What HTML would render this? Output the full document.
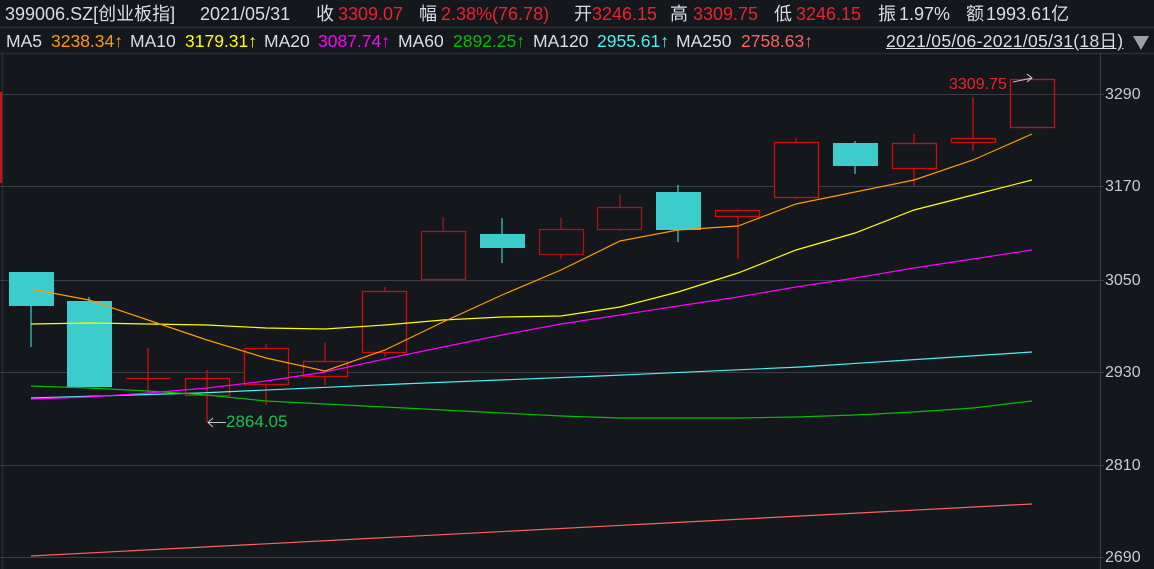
<!DOCTYPE html>
<html><head><meta charset="utf-8"><style>
html,body{margin:0;padding:0;background:#14171c;width:1154px;height:569px;overflow:hidden}
body{font-family:"Liberation Sans","Noto Sans CJK SC",sans-serif;color:#d8dde6;position:relative}
.a{position:absolute;white-space:nowrap;font-size:18px;line-height:20px;top:4px}
.b{position:absolute;white-space:nowrap;font-size:17.5px;line-height:20px;top:31px}
.r{color:#e8242c}
.lab{position:absolute;left:1105px;font-size:16px;color:#c4ccd6}
</style></head><body>
<div class="a" style="left:5px">399006.SZ[创业板指]</div>
<div class="a" style="left:200px">2021/05/31</div>
<div class="a" style="left:316px">收</div><div class="a r" style="left:338px">3309.07</div>
<div class="a" style="left:419px">幅</div><div class="a r" style="left:441px">2.38%(76.78)</div>
<div class="a" style="left:574px">开</div><div class="a r" style="left:592px">3246.15</div>
<div class="a" style="left:670px">高</div><div class="a r" style="left:693px">3309.75</div>
<div class="a" style="left:774px">低</div><div class="a r" style="left:796px">3246.15</div>
<div class="a" style="left:878px">振</div><div class="a" style="left:899px">1.97%</div>
<div class="a" style="left:966px">额</div><div class="a" style="left:986px">1993.61亿</div>

<div class="b" style="left:6px">MA5</div><div class="b" style="left:51px;color:#ff9a00">3238.34↑</div>
<div class="b" style="left:130px">MA10</div><div class="b" style="left:185px;color:#ffff00">3179.31↑</div>
<div class="b" style="left:264px">MA20</div><div class="b" style="left:318px;color:#ff00ff">3087.74↑</div>
<div class="b" style="left:398px">MA60</div><div class="b" style="left:453px;color:#00c000">2892.25↑</div>
<div class="b" style="left:533px">MA120</div><div class="b" style="left:597px;color:#4cf0f0">2955.61↑</div>
<div class="b" style="left:676px">MA250</div><div class="b" style="left:741px;color:#ff6060">2758.63↑</div>
<div class="b" style="left:886px;text-decoration:underline;letter-spacing:0.3px">2021/05/06-2021/05/31(18日)</div>
<div style="position:absolute;left:1133px;top:36px;width:0;height:0;border-left:8px solid transparent;border-right:8px solid transparent;border-top:14px solid #9aa0a8"></div>
<div class="lab" style="top:86px">3290</div>
<div class="lab" style="top:178px">3170</div>
<div class="lab" style="top:272px">3050</div>
<div class="lab" style="top:364px">2930</div>
<div class="lab" style="top:457px">2810</div>
<div class="lab" style="top:549px">2690</div>
<div style="position:absolute;left:949px;top:76px;font-size:16px;color:#e8242c">3309.75</div>
<div style="position:absolute;left:226px;top:412px;font-size:17px;color:#20c050">2864.05</div>
<svg width="1154" height="569" style="position:absolute;left:0;top:0" xmlns="http://www.w3.org/2000/svg">
<g stroke="#2a2d33" stroke-width="1.5" fill="none">
<line x1="0" y1="27.5" x2="1154" y2="27.5"/>
<line x1="0" y1="53.5" x2="1154" y2="53.5"/>
<line x1="2.5" y1="53" x2="2.5" y2="569"/>
</g>
<g stroke="#3a3d44" stroke-width="1" fill="none">
<line x1="0" y1="94.5" x2="1104" y2="94.5"/><line x1="0" y1="186.5" x2="1104" y2="186.5"/>
<line x1="0" y1="280.5" x2="1104" y2="280.5"/><line x1="0" y1="372.5" x2="1104" y2="372.5"/>
<line x1="0" y1="465.5" x2="1104" y2="465.5"/><line x1="0" y1="557.5" x2="1104" y2="557.5"/>
<line x1="1100.5" y1="53" x2="1100.5" y2="569"/>
</g>
<rect x="0" y="92" width="2" height="91" fill="#c01818"/>
<g stroke="#3ccccc" stroke-width="1.2">
<line x1="31" y1="305" x2="31" y2="347"/><line x1="89" y1="297" x2="89" y2="301"/>
<line x1="502" y1="218" x2="502" y2="263"/><line x1="678" y1="185" x2="678" y2="242"/><line x1="855" y1="141" x2="855" y2="174"/>
</g>
<g fill="#3ccccc">
<rect x="9" y="272" width="45" height="34"/><rect x="67" y="301" width="45" height="86"/>
<rect x="480" y="234" width="45" height="14"/><rect x="656" y="192" width="45" height="38"/><rect x="833" y="143" width="45" height="23"/>
</g>
<g stroke="#d00d0d" stroke-width="1.3" fill="none">
<line x1="148" y1="348" x2="148" y2="392"/><line x1="126" y1="378.5" x2="171" y2="378.5"/>
<line x1="207" y1="370" x2="207" y2="422"/><rect x="185.5" y="378.5" width="44" height="17"/>
<line x1="266" y1="344" x2="266" y2="405"/><rect x="244.5" y="348.5" width="44" height="36" fill="#14171c"/>
<line x1="325" y1="343" x2="325" y2="385"/><rect x="303.5" y="361.5" width="44" height="15" fill="#14171c"/>
<line x1="385" y1="287" x2="385" y2="357"/><rect x="362.5" y="291.5" width="44" height="61" fill="#14171c"/>
<g stroke="#a81414"><line x1="443" y1="217" x2="443" y2="231"/><rect x="421.5" y="231.5" width="44" height="48"/>
<line x1="561" y1="218" x2="561" y2="259"/><rect x="539.5" y="229.5" width="44" height="25" fill="#14171c"/>
<line x1="620" y1="195" x2="620" y2="231"/><rect x="597.5" y="207.5" width="44" height="22" fill="#14171c"/></g>
<line x1="738" y1="209" x2="738" y2="259"/><rect x="715.5" y="210.5" width="44" height="6" fill="#14171c"/>
<line x1="796" y1="138" x2="796" y2="199"/><rect x="774.5" y="142.5" width="44" height="55" fill="#14171c"/>
<line x1="914" y1="134" x2="914" y2="186"/><rect x="892.5" y="143.5" width="44" height="25" fill="#14171c"/>
<line x1="973" y1="97" x2="973" y2="151"/><rect x="951.5" y="138.5" width="44" height="4" fill="#14171c"/>
<rect x="1010.5" y="79.5" width="44" height="48"/>
</g>
<g fill="none" stroke-width="1.2">
<polyline stroke="#ff6060" points="31,556 1032,504"/>
<polyline stroke="#4cf0f0" points="31,398 200,393 400,384 600,376 800,367 1032,352"/>
<polyline stroke="#00c000" points="31,386 89,388 148,391 207,395 266,401 325,404 385,407 443,410 502,413 561,416 620,418 678,418 738,418 796,417 855,415 914,412 973,408 1032,401"/>
<polyline stroke="#ff00ff" points="31,399 89,397 148,393 207,388 266,381 325,372 385,359 443,347 502,335 561,324 620,315 678,306 738,297 796,287 855,278 914,268 973,259 1032,250"/>
<polyline stroke="#ffff00" points="31,324 89,323 148,324 207,325 266,328 325,329 385,325 443,320 502,317 561,316 620,307 678,292 738,273 796,250 855,233 914,210 973,195 1032,180"/>
<polyline stroke="#ff9a00" points="31,289 89,300 148,320 207,340 266,358 325,371 385,350 443,322 502,295 561,270 620,241 678,230 738,226 796,204 855,192 914,180 973,160 1032,134"/>
</g>
<g stroke="#c8c8c8" stroke-width="1" fill="none">
<line x1="208" y1="422.5" x2="226" y2="422.5"/><polyline points="213,418 208,422.5 213,427"/>
<line x1="1013" y1="82" x2="1032" y2="78"/><polyline points="1027,74 1032,78 1027,82"/>
</g>
</svg>
</body></html>
